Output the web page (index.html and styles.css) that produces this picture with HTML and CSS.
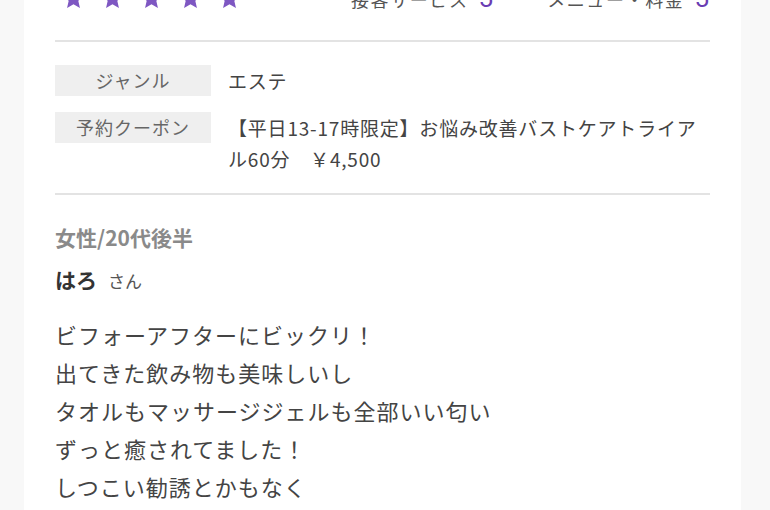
FILE: index.html
```html
<!DOCTYPE html>
<html lang="ja">
<head>
<meta charset="utf-8">
<link rel="stylesheet" href="styles.css">
</head>
<body>
<div class="page">
  <div class="rating">
    <div class="stars">
      <svg class="star" viewBox="0 0 24 24"><path d="M12 1.5l3.1 7.1 7.7.7-5.8 5.1 1.7 7.6L12 18l-6.7 4 1.7-7.6-5.8-5.1 7.7-.7z"/></svg>
      <svg class="star" viewBox="0 0 24 24"><path d="M12 1.5l3.1 7.1 7.7.7-5.8 5.1 1.7 7.6L12 18l-6.7 4 1.7-7.6-5.8-5.1 7.7-.7z"/></svg>
      <svg class="star" viewBox="0 0 24 24"><path d="M12 1.5l3.1 7.1 7.7.7-5.8 5.1 1.7 7.6L12 18l-6.7 4 1.7-7.6-5.8-5.1 7.7-.7z"/></svg>
      <svg class="star" viewBox="0 0 24 24"><path d="M12 1.5l3.1 7.1 7.7.7-5.8 5.1 1.7 7.6L12 18l-6.7 4 1.7-7.6-5.8-5.1 7.7-.7z"/></svg>
      <svg class="star" viewBox="0 0 24 24"><path d="M12 1.5l3.1 7.1 7.7.7-5.8 5.1 1.7 7.6L12 18l-6.7 4 1.7-7.6-5.8-5.1 7.7-.7z"/></svg>
    </div>
    <div class="scores">
      <div class="score"><span class="score-label">接客サービス</span><span class="score-num">5</span></div>
      <div class="score"><span class="score-label">メニュー・料金</span><span class="score-num">5</span></div>
    </div>
  </div>
  <div class="info">
    <div class="info-row">
      <div class="info-label">ジャンル</div>
      <div class="info-value">エステ</div>
    </div>
    <div class="info-row">
      <div class="info-label">予約クーポン</div>
      <div class="info-value">【平日13-17時限定】お悩み改善バストケアトライアル60分　￥4,500</div>
    </div>
  </div>
  <div class="review">
    <div class="reviewer-attr">女性/20代後半</div>
    <div class="reviewer-name"><span class="name">はろ</span><span class="san">さん</span></div>
    <div class="review-body">
      <p>ビフォーアフターにビックリ！</p>
      <p>出てきた飲み物も美味しいし</p>
      <p>タオルもマッサージジェルも全部いい匂い</p>
      <p>ずっと癒されてました！</p>
      <p>しつこい勧誘とかもなく</p>
      <p>スタッフの方もとても親切でした</p>
    </div>
  </div>
</div>
</body>
</html>
```
FILE: styles.css
```css
html, body {
  margin: 0;
  padding: 0;
}
body {
  background: #f8f8f8;
  font-family: "Noto Sans CJK JP", "Noto Sans", sans-serif;
  color: #444;
  overflow: hidden;
  height: 510px;
}
.page {
  margin-left: 24px;
  width: 655px;
  padding: 0 31px;
  background: #fff;
  min-height: 600px;
}
.rating {
  display: flex;
  align-items: flex-end;
  justify-content: space-between;
  margin-top: -14px;
  height: 24px;
  padding-bottom: 30px;
  border-bottom: 2px solid #e3e3e3;
}
.stars {
  display: flex;
  gap: 16px;
  padding-left: 7px;
  padding-bottom: 0;
}
.star {
  width: 23px;
  height: 23px;
  fill: #7e57c2;
  display: block;
}
.scores {
  display: flex;
  gap: 54px;
  align-items: flex-end;
  padding-right: 1px;
}
.score {
  display: flex;
  align-items: baseline;
  gap: 10px;
}
.score-label {
  font-size: 18px;
  letter-spacing: 1.6px;
  color: #555;
  line-height: 22px;
}
.score-num {
  font-size: 26px;
  line-height: 22px;
  color: #6a3db3;
  font-family: "Roboto", "Noto Sans", sans-serif;
}
.info {
  padding: 23px 0 19px;
  border-bottom: 2px solid #e3e3e3;
  display: flex;
  flex-direction: column;
  gap: 16px;
}
.info-row {
  display: flex;
  align-items: flex-start;
  gap: 17px;
}
.info-label {
  flex: 0 0 156px;
  height: 31px;
  line-height: 31px;
  background: #efefef;
  text-align: center;
  font-size: 18px;
  letter-spacing: 1px;
  color: #666;
}
.info-value {
  flex: 1;
  font-size: 19px;
  line-height: 31px;
  color: #444;
  letter-spacing: 0.8px;
}
.review {
  padding-top: 27px;
}
.reviewer-attr {
  font-size: 21px;
  font-weight: bold;
  color: #8a8a8a;
  line-height: 30px;
}
.reviewer-name {
  margin-top: 12px;
  line-height: 30px;
  display: flex;
  align-items: baseline;
  gap: 11px;
}
.name {
  font-size: 21px;
  font-weight: bold;
  color: #333;
}
.san {
  font-size: 17px;
  color: #555;
}
.review-body {
  margin-top: 19px;
}
.review-body p {
  margin: 0;
  font-size: 22px;
  line-height: 38px;
  letter-spacing: 1px;
  color: #444;
}
```
